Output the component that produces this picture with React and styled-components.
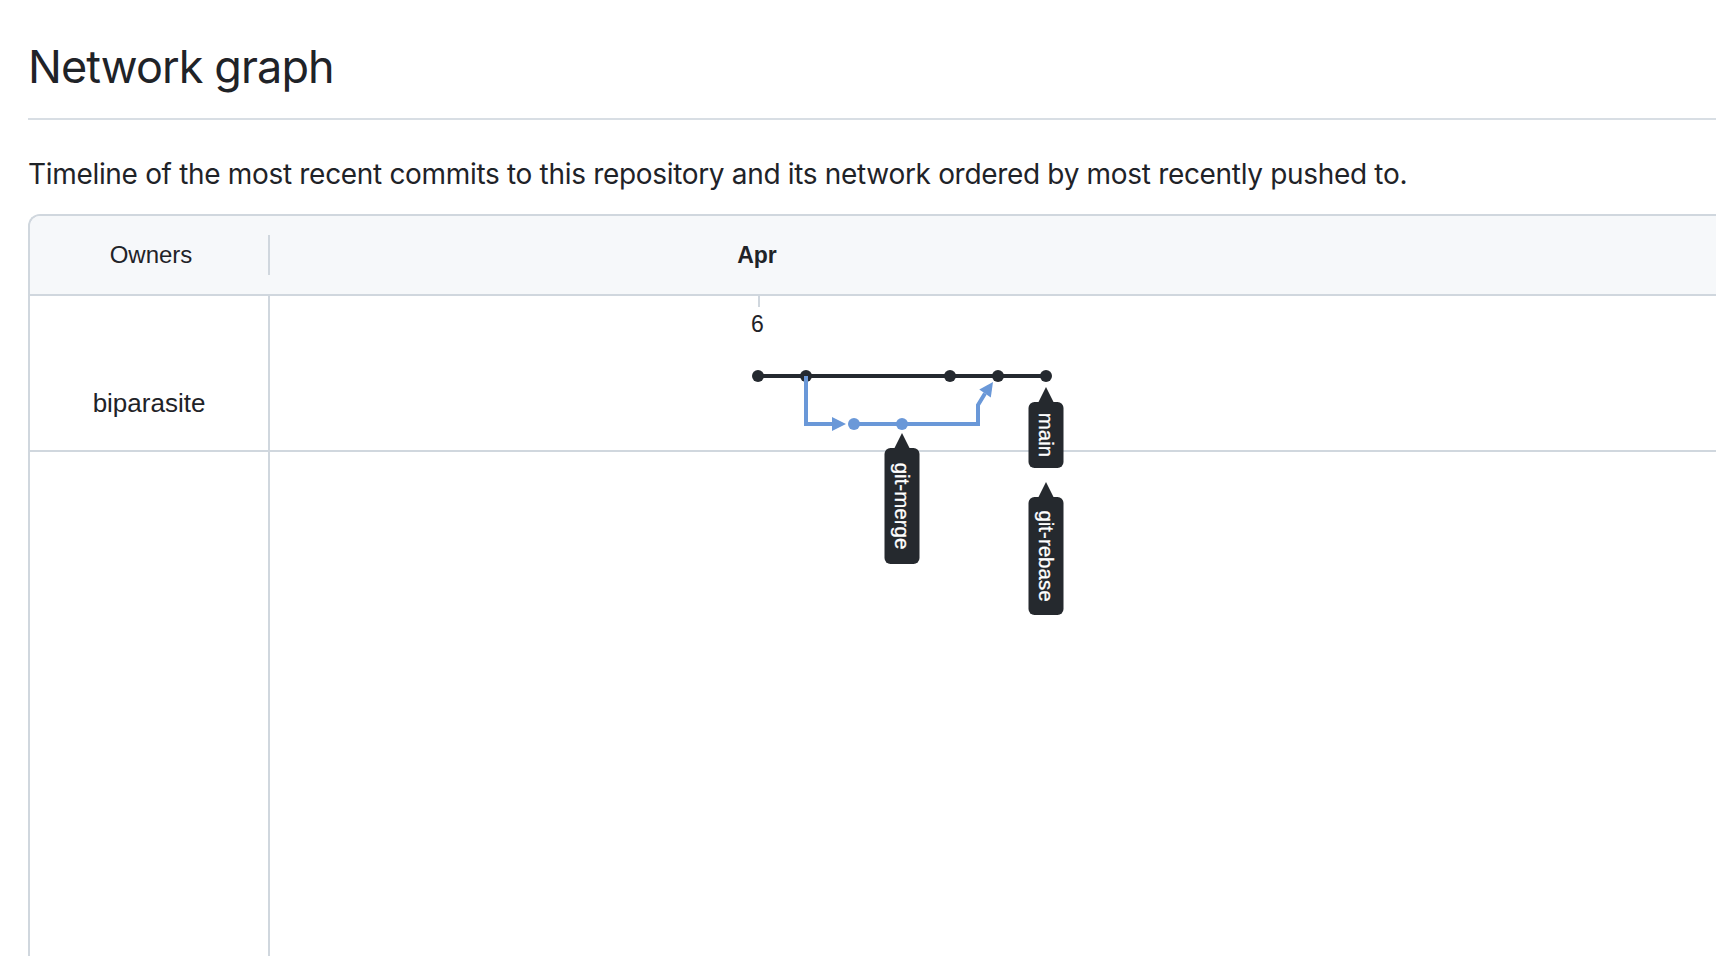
import styled, { createGlobalStyle } from "styled-components";

const GlobalStyle = createGlobalStyle`
  html, body {
    margin: 0;
    padding: 0;
    background: #ffffff;
    overflow: hidden;
  }
  body {
    font-family: Inter, "Liberation Sans", sans-serif;
    color: #1f2328;
  }
`;

const Page = styled.div`
  padding: 0 0 0 28px;
`;

const Subhead = styled.div`
  padding: 39px 0 23px;
  border-bottom: 2px solid #d8dee4;
`;

const Title = styled.h2`
  margin: 0;
  font-family: Inter, "Liberation Sans", sans-serif;
  font-size: 45px;
  line-height: 56px;
  font-weight: 400;
  letter-spacing: -0.9px;
  color: #1f2328;
`;

const Lead = styled.p`
  margin: 34px 0 20px;
  font-family: Inter, "Liberation Sans", sans-serif;
  font-size: 28px;
  line-height: 40px;
  letter-spacing: -0.32px;
  color: #1f2328;
`;

const Network = styled.div`
  width: 1760px;
  border-top: 2px solid #d0d7de;
  border-left: 2px solid #d0d7de;
  border-top-left-radius: 12px;
  font-family: "Liberation Sans", Arial, sans-serif;
`;

const HeadRow = styled.div`
  display: flex;
  align-items: center;
  height: 78px;
  background: #f6f8fa;
  border-bottom: 2px solid #d0d7de;
  border-top-left-radius: 10px;
`;

const OwnersHead = styled.div`
  width: 238px;
  text-align: center;
  font-size: 24px;
  line-height: 24px;
  padding-left: 4px;
  box-sizing: border-box;
`;

const HeadDivider = styled.div`
  width: 2px;
  height: 40px;
  background: #d0d7de;
`;

const Months = styled.div`
  position: relative;
  flex: 1;
  height: 24px;
`;

const Month = styled.span`
  position: absolute;
  top: 0;
  transform: translateX(-50%);
  font-size: 23px;
  line-height: 24px;
  font-weight: 700;
`;

const Body = styled.div`
  display: flex;
  min-height: 700px;
`;

const OwnerCol = styled.div`
  width: 238px;
  border-right: 2px solid #d0d7de;
`;

const OwnerRow = styled.div`
  display: flex;
  align-items: flex-end;
  justify-content: center;
  height: 156px;
  padding-bottom: 32px;
  box-sizing: border-box;
  border-bottom: 2px solid #d0d7de;
  font-size: 26px;
  line-height: 30px;
`;

const Canvas = styled.div`
  position: relative;
  flex: 1;
`;

const RowBand = styled.div`
  height: 154px;
  border-bottom: 2px solid #d0d7de;
`;

const GraphLayer = styled.svg`
  position: absolute;
  top: 0;
  left: 0;
  overflow: visible;
`;

const COL = 48;
const X0 = 488;
const MAIN_Y = 80;
const BRANCH_Y = 128;
const cx = (i) => X0 + i * COL;

const mainCommits = [0, 1, 4, 5, 6];
const branchCommits = [2, 3];

const labels = [
  { name: "main", col: 6, tip: 91, len: 66 },
  { name: "git-merge", col: 3, tip: 137, len: 116 },
  { name: "git-rebase", col: 6, tip: 186, len: 118 },
];

function BranchLabel({ name, col, tip, len }) {
  const x = cx(col);
  const top = tip + 15;
  const mid = top + len / 2;
  return (
    <g>
      <polygon points={`${x},${tip} ${x - 8},${top + 1} ${x + 8},${top + 1}`} fill="#25292e" />
      <rect x={x - 17.5} y={top} width={35} height={len} rx={6} fill="#25292e" />
      <text
        x={x}
        y={mid}
        transform={`rotate(90 ${x} ${mid})`}
        textAnchor="middle"
        dominantBaseline="central"
        fontFamily="'Liberation Sans', Arial, sans-serif"
        fontSize="20.5"
        fill="#ffffff"
        stroke="#ffffff"
        strokeWidth="0.3"
      >
        {name}
      </text>
    </g>
  );
}

function Graph() {
  const blue = "#6a98d8";
  const dark = "#24292f";
  return (
    <GraphLayer width="1000" height="400">
      <line x1={X0 + 1} y1={0} x2={X0 + 1} y2={11} stroke="#d0d7de" strokeWidth="2" />
      <text
        x={X0 - 0.5}
        y={36}
        textAnchor="middle"
        fontFamily="'Liberation Sans', Arial, sans-serif"
        fontSize="23"
        fill="#1f2328"
      >
        6
      </text>

      <path d={`M ${cx(0)} ${MAIN_Y} H ${cx(6)}`} stroke={dark} strokeWidth="4" fill="none" />
      {mainCommits.map((i) => (
        <circle key={i} cx={cx(i)} cy={MAIN_Y} r="6" fill={dark} />
      ))}

      <path
        d={`M ${cx(1)} ${MAIN_Y} V ${BRANCH_Y} H 564`}
        stroke={blue}
        strokeWidth="4"
        fill="none"
      />
      <polygon points={`576,${BRANCH_Y} 562,${BRANCH_Y - 7} 562,${BRANCH_Y + 7}`} fill={blue} />
      <path
        d={`M ${cx(2)} ${BRANCH_Y} H 708 V 109 L 715 97.5`}
        stroke={blue}
        strokeWidth="4"
        fill="none"
      />
      <polygon points="723,86 720.8,101.5 709.3,93.5" fill={blue} />
      {branchCommits.map((i) => (
        <circle key={i} cx={cx(i)} cy={BRANCH_Y} r="6" fill={blue} />
      ))}

      {labels.map((l) => (
        <BranchLabel key={l.name} {...l} />
      ))}
    </GraphLayer>
  );
}

export default function App() {
  return (
    <>
      <GlobalStyle />
      <Page>
        <Subhead>
          <Title>Network graph</Title>
        </Subhead>
        <Lead>
          Timeline of the most recent commits to this repository and its network ordered by most
          recently pushed to.
        </Lead>
        <Network>
          <HeadRow>
            <OwnersHead>Owners</OwnersHead>
            <HeadDivider />
            <Months>
              <Month style={{ left: X0 - 1 }}>Apr</Month>
            </Months>
          </HeadRow>
          <Body>
            <OwnerCol>
              <OwnerRow>biparasite</OwnerRow>
            </OwnerCol>
            <Canvas>
              <RowBand />
              <Graph />
            </Canvas>
          </Body>
        </Network>
      </Page>
    </>
  );
}
